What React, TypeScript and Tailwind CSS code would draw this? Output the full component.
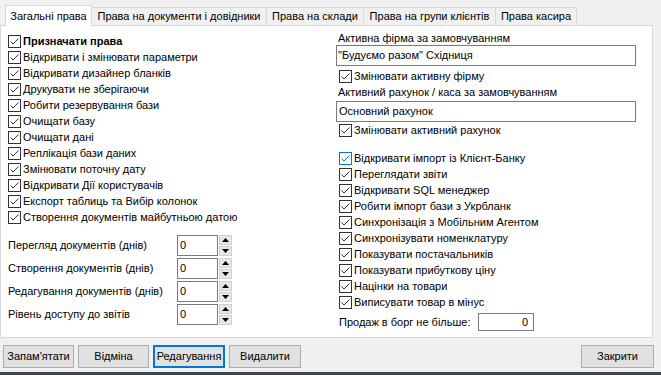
import React from 'react';

const font = { fontFamily: '"Liberation Sans", Arial, sans-serif' };

const Check: React.FC<{ label: string; bold?: boolean; blue?: boolean }> = ({ label, bold, blue }) => (
  <div className="flex items-center h-[16px]">
    <div
      className={
        'w-[13px] h-[13px] border bg-white flex items-center justify-center shrink-0 ' +
        (blue ? 'border-[#0078d7]' : 'border-[#333333]')
      }
    >
      <svg width="11" height="11" viewBox="0 0 11 11">
        <polyline
          points="1.5,5.5 4,8 9.5,2.5"
          fill="none"
          stroke={blue ? '#0078d7' : '#333333'}
          strokeWidth="1"
        />
      </svg>
    </div>
    <span className={'ml-[2px] text-[11px] leading-none text-black whitespace-nowrap ' + (bold ? 'font-bold' : '')}>
      {label}
    </span>
  </div>
);

const Spin: React.FC<{ label: string }> = ({ label }) => (
  <div className="flex items-center h-[21px]">
    <span className="w-[169px] text-[11px] text-black whitespace-nowrap">{label}</span>
    <div className="w-[41px] h-[21px] border border-[#7a7a7a] bg-white flex items-center pl-[2px] text-[11px]">0</div>
    <div className="ml-[1px] flex flex-col gap-[1px]">
      <div className="w-[13px] h-[10px] bg-[#e6e6e6] border border-[#d0d0d0] flex items-center justify-center">
        <svg width="7" height="4" viewBox="0 0 7 4">
          <polygon points="3.5,0 7,4 0,4" fill="#000" />
        </svg>
      </div>
      <div className="w-[13px] h-[10px] bg-[#e6e6e6] border border-[#d0d0d0] flex items-center justify-center">
        <svg width="7" height="4" viewBox="0 0 7 4">
          <polygon points="0,0 7,0 3.5,4" fill="#000" />
        </svg>
      </div>
    </div>
  </div>
);

const Btn: React.FC<{ label: string; active?: boolean; w?: string }> = ({ label, active, w }) => (
  <div
    className={
      'h-[23px] bg-[#e1e1e1] flex items-center justify-center text-[11px] text-black ' +
      (w ?? 'w-[71px]') +
      ' ' +
      (active ? 'border-2 border-[#0078d7]' : 'border border-[#adadad]')
    }
  >
    {label}
  </div>
);

const leftChecks = [
  'Відкривати і змінювати параметри',
  'Відкривати дизайнер бланків',
  'Друкувати не зберігаючи',
  'Робити резервування бази',
  'Очищати базу',
  'Очищати дані',
  'Реплікація бази даних',
  'Змінювати поточну дату',
  'Відкривати Дії користувачів',
  'Експорт таблиць та Вибір колонок',
  'Створення документів майбутньою датою',
];

const rightChecks = [
  'Переглядати звіти',
  'Відкривати SQL менеджер',
  'Робити імпорт бази з Укрбланк',
  'Синхронізація з Мобільним Агентом',
  'Синхронізувати номенклатуру',
  'Показувати постачальників',
  'Показувати прибуткову ціну',
  'Націнки на товари',
  'Виписувати товар в мінус',
];

const tabs = [
  { label: 'Права на документи і довідники', w: 'w-[175px]' },
  { label: 'Права на склади', w: 'w-[97px]' },
  { label: 'Права на групи клієнтів', w: 'w-[132px]' },
  { label: 'Права касира', w: 'w-[81px]' },
];

export default function App() {
  return (
    <div className="w-[661px] h-[375px] bg-[#f0f0f0] flex flex-col overflow-hidden" style={font}>
      {/* tabs */}
      <div className="relative z-10 flex items-start pl-[5px] pt-[5px] h-[26px]">
        <div className="w-[87px] h-[21px] bg-white border border-b-0 border-[#d9d9d9] flex items-center justify-center text-[11px] text-black">
          Загальні права
        </div>
        {tabs.map((t) => (
          <div
            key={t.label}
            className={
              t.w +
              ' mt-[2px] h-[18px] bg-[#f0f0f0] border-t border-r border-[#d9d9d9] flex items-center justify-center text-[11px] text-black whitespace-nowrap'
            }
          >
            {t.label}
          </div>
        ))}
      </div>

      {/* panel */}
      <div className="-mt-[1px] w-[653px] h-[313px] bg-white border border-[#d9d9d9] flex">
        <div className="w-[335px] pl-[7px] pt-[7px] flex flex-col">
          <Check label="Призначати права" bold />
          {leftChecks.map((c) => (
            <Check key={c} label={c} />
          ))}
          <div className="mt-[10px] flex flex-col gap-[2px]">
            <Spin label="Перегляд документів (днів)" />
            <Spin label="Створення документів (днів)" />
            <Spin label="Редагування документів (днів)" />
            <Spin label="Рівень доступу до звітів" />
          </div>
        </div>

        <div className="flex-1 pt-[5px] flex flex-col">
          <div className="h-[14px] pl-[2px] text-[11px] leading-[14px] text-black">Активна фірма за замовчуванням</div>
          <div className="w-[300px] h-[21px] border border-[#7a7a7a] bg-white flex items-center pl-[1px] text-[11px] text-black">
            "Будуємо разом" Східниця
          </div>
          <div className="mt-[2px] pl-[3px]">
            <Check label="Змінювати активну фірму" />
          </div>
          <div className="mt-[1px] h-[14px] pl-[2px] text-[11px] leading-[14px] text-black">
            Активний рахунок / каса за замовчуванням
          </div>
          <div className="mt-[2px] w-[300px] h-[21px] border border-[#7a7a7a] bg-white flex items-center pl-[2px] text-[11px] text-black">
            Основний рахунок
          </div>
          <div className="pl-[3px]">
            <Check label="Змінювати активний рахунок" />
          </div>
          <div className="mt-[12px] pl-[3px] flex flex-col">
            <Check label="Відкривати імпорт із Клієнт-Банку" blue />
            {rightChecks.map((c) => (
              <Check key={c} label={c} />
            ))}
          </div>
          <div className="mt-[3px] pl-[3px] flex items-center h-[18px]">
            <span className="w-[139px] text-[11px] text-black whitespace-nowrap">Продаж в борг не більше:</span>
            <div className="w-[56px] h-[18px] border border-[#7a7a7a] bg-white flex items-center justify-end pr-[5px] text-[11px] text-black">
              0
            </div>
          </div>
        </div>
      </div>

      {/* buttons */}
      <div className="mt-[7px] flex items-center pl-[3px] pr-[7px]">
        <div className="flex gap-[4px]">
          <Btn label="Запам'ятати" />
          <Btn label="Відміна" />
          <Btn label="Редагування" active w="w-[72px]" />
          <Btn label="Видалити" w="w-[72px]" />
        </div>
        <div className="ml-auto">
          <Btn label="Закрити" w="w-[73px]" />
        </div>
      </div>
      <div className="mt-auto h-[3px] bg-[#3c4650]" />
    </div>
  );
}
